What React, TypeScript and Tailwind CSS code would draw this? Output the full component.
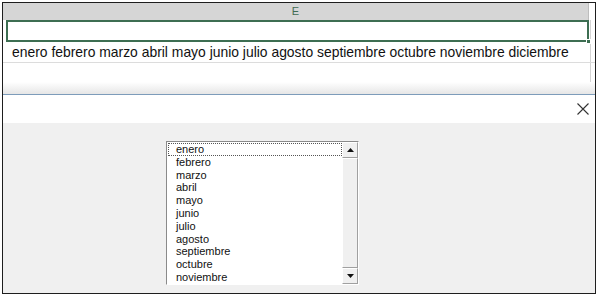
const months = [
  "enero",
  "febrero",
  "marzo",
  "abril",
  "mayo",
  "junio",
  "julio",
  "agosto",
  "septiembre",
  "octubre",
  "noviembre",
  "diciembre",
];

function Sheet() {
  return (
    <div className="flex flex-col" style={{ fontFamily: "'Liberation Sans', Arial, sans-serif" }}>
      {/* column header */}
      <div className="flex h-[17px]">
        <div className="flex-1 bg-[#d6d6d6] flex items-center justify-center text-[11px] text-[#3f6b52] leading-none border-r border-[#bdbdbd]">
          E
        </div>
        <div className="w-[6px] bg-white" />
      </div>
      {/* selected cell row */}
      <div className="flex h-[22px]">
        <div className="w-[3px]" />
        <div className="relative flex-1 border-2 border-[#3d6e52]">
          <div className="absolute -right-[4px] -bottom-[4px] w-[5px] h-[5px] bg-[#3d6e52] border border-white" />
        </div>
        <div className="w-[5px] border-l border-[#d4d4d4] ml-[1px]" />
      </div>
      {/* text row */}
      <div className="flex h-[21px] border-b border-[#dcdcdc]">
        <div className="flex-1 pl-[9px] text-[13.9px] text-[#111] leading-[21px] whitespace-nowrap">
          {months.join(" ")}
        </div>
        <div className="w-[5px] border-l border-[#d4d4d4]" />
      </div>
      {/* empty row */}
      <div className="flex h-[19px]">
        <div className="flex-1" />
        <div className="w-[5px] border-l border-[#d4d4d4]" />
      </div>
      {/* window shadow */}
      <div className="h-[12px] bg-gradient-to-b from-white to-[#e6e6e6]" />
      <div className="h-[1px] bg-[#7d9cba]" />
    </div>
  );
}

function ListBox() {
  return (
    <div className="flex w-[193px] h-[144px] border-t border-l border-[#8a8a8a] border-r border-b border-r-white border-b-white bg-white">
      <div className="flex-1 overflow-hidden pt-[1px] pl-[1px]">
        {months.slice(0, 11).map((m, i) => (
          <div
            key={m}
            className={
              "h-[12.8px] leading-[12.8px] pl-[8px] text-[11px] text-[#111] " +
              (i === 0 ? "outline outline-1 outline-dotted outline-[#555] -outline-offset-1" : "")
            }
          >
            {m}
          </div>
        ))}
      </div>
      <div className="w-[16px] flex flex-col bg-[#f4f4f4]">
        <div className="h-[16px] bg-[#f0f0f0] border-t border-l border-white border-r border-b border-r-[#a0a0a0] border-b-[#a0a0a0] flex items-center justify-center">
          <svg width="7" height="4" viewBox="0 0 7 4">
            <path d="M0 4 L3.5 0 L7 4 Z" fill="#111" />
          </svg>
        </div>
        <div className="flex-1 bg-[#f0f0f0] border-t border-l border-white border-r border-b border-r-[#a0a0a0] border-b-[#a0a0a0]" />
        <div className="h-[16px] bg-[#f0f0f0] border-t border-l border-white border-r border-b border-r-[#a0a0a0] border-b-[#a0a0a0] flex items-center justify-center">
          <svg width="7" height="4" viewBox="0 0 7 4">
            <path d="M0 0 L3.5 4 L7 0 Z" fill="#111" />
          </svg>
        </div>
      </div>
    </div>
  );
}

function Dialog() {
  return (
    <div className="flex-1 flex flex-col" style={{ fontFamily: "'Liberation Sans', Tahoma, sans-serif" }}>
      <div className="h-[28px] bg-white flex items-center justify-end pr-[3px]">
        <svg width="12" height="12" viewBox="0 0 12 12" className="mr-[3px]">
          <path d="M0.5 0.5 L11.5 11.5 M11.5 0.5 L0.5 11.5" stroke="#333" strokeWidth="1.1" />
        </svg>
      </div>
      <div className="flex-1 bg-[#f0f0f0] pt-[18px] pl-[163px]">
        <ListBox />
      </div>
    </div>
  );
}

export default function App() {
  return (
    <div className="w-[600px] h-[297px] bg-white pt-[2px] pl-[2px]">
      <div className="w-[594px] h-[292px] border border-[#1e1e1e] flex flex-col overflow-hidden">
        <Sheet />
        <Dialog />
      </div>
    </div>
  );
}
